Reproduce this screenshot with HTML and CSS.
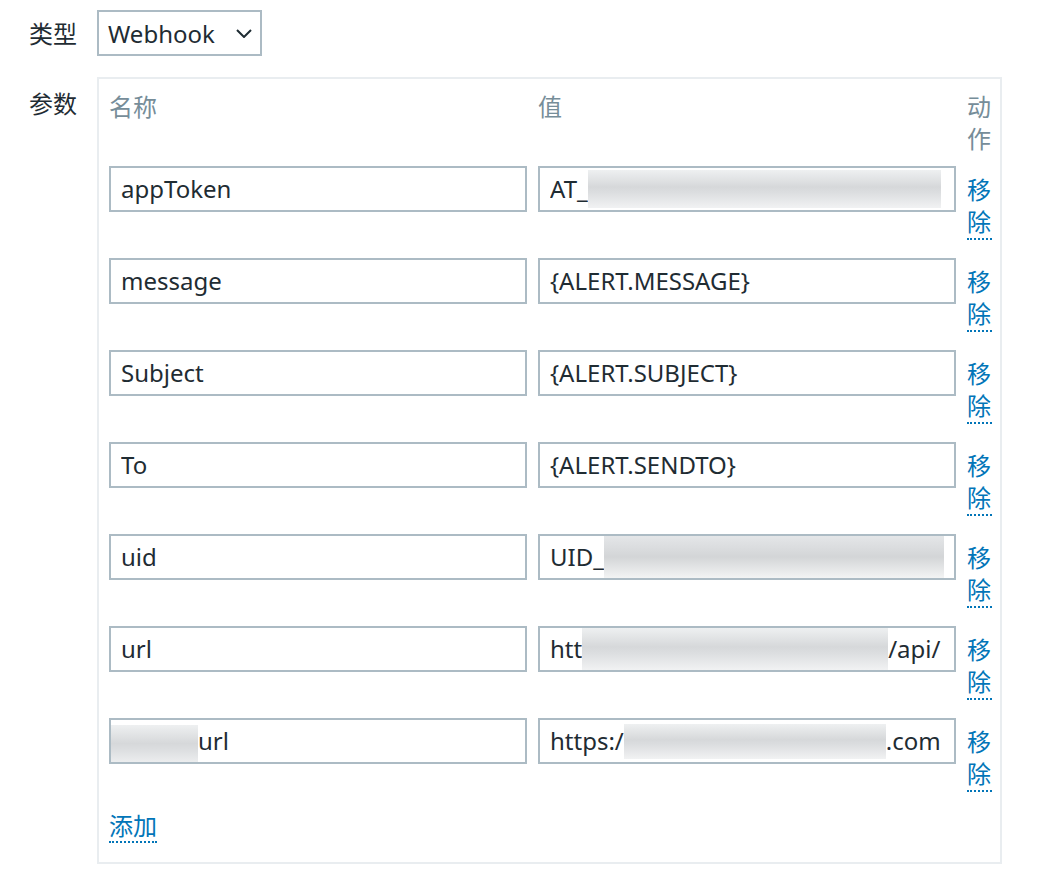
FILE: index.html
```html
<!DOCTYPE html>
<html lang="zh">
<head>
<meta charset="utf-8">
<title>Webhook</title>
<link rel="stylesheet" href="styles.css">
</head>
<body>
<div class="form">
  <div class="label lbl-type">类型</div>
  <div class="field">
    <div class="select">
      <span class="select-text">Webhook</span>
      <svg class="chevron" width="16" height="9" viewBox="0 0 16 9"><polyline points="1,1 8,8 15,1" fill="none" stroke="#1f2c33" stroke-width="2"/></svg>
    </div>
  </div>
  <div class="label lbl-params">参数</div>
  <div class="field">
    <div class="params">
      <div class="prow head">
        <div class="hcell">名称</div>
        <div class="hcell">值</div>
        <div class="hcell">动作</div>
      </div>
      <div class="prow">
        <div class="input"><div class="txt">appToken</div></div>
        <div class="input"><div class="txt">AT_<span class="blur b1"></span></div></div>
        <div class="act"><a class="link-action">移除</a></div>
      </div>
      <div class="prow">
        <div class="input"><div class="txt">message</div></div>
        <div class="input"><div class="txt">{ALERT.MESSAGE}</div></div>
        <div class="act"><a class="link-action">移除</a></div>
      </div>
      <div class="prow">
        <div class="input"><div class="txt">Subject</div></div>
        <div class="input"><div class="txt">{ALERT.SUBJECT}</div></div>
        <div class="act"><a class="link-action">移除</a></div>
      </div>
      <div class="prow">
        <div class="input"><div class="txt">To</div></div>
        <div class="input"><div class="txt">{ALERT.SENDTO}</div></div>
        <div class="act"><a class="link-action">移除</a></div>
      </div>
      <div class="prow">
        <div class="input"><div class="txt">uid</div></div>
        <div class="input"><div class="txt">UID_<span class="blur b5"></span></div></div>
        <div class="act"><a class="link-action">移除</a></div>
      </div>
      <div class="prow">
        <div class="input"><div class="txt">url</div></div>
        <div class="input"><div class="txt">htt<span class="blur b6"></span>/api/</div></div>
        <div class="act"><a class="link-action">移除</a></div>
      </div>
      <div class="prow">
        <div class="input"><div class="txt nopad"><span class="blur b7n"></span>url</div></div>
        <div class="input"><div class="txt">https:/<span class="blur b7"></span>.com</div></div>
        <div class="act"><a class="link-action">移除</a></div>
      </div>
      <div class="add"><a class="link-action add-link">添加</a></div>
    </div>
  </div>
</div>
</body>
</html>
```

FILE: styles.css
```css
* { box-sizing: border-box; }
body {
  margin: 0;
  padding: 10px 0 0 0;
  background: #ffffff;
  font-family: "Noto Sans", "Noto Sans CJK SC", sans-serif;
  font-size: 24px;
  line-height: 32px;
  color: #1f2c33;
}
.form {
  display: grid;
  grid-template-columns: 77px 905px;
  column-gap: 20px;
  row-gap: 21px;
}
.label {
  text-align: right;
  color: #1f2c33;
}
.lbl-type { padding-top: 8px; }
.lbl-params { padding-top: 11px; }
.select {
  width: 165px;
  height: 46px;
  border: 2px solid #acbbc4;
  display: flex;
  align-items: center;
  justify-content: space-between;
  padding: 2px 8px 0 9px;
}
.select-text { white-space: nowrap; }
.chevron { display: block; margin-top: -2px; }
.params {
  width: 905px;
  border: 2px solid #e9edf0;
  padding: 12px 8px 19px 10px;
}
.prow {
  display: grid;
  grid-template-columns: 418px 418px 25px;
  column-gap: 11px;
  align-items: start;
  margin-bottom: 18px;
}
.prow.head { margin-bottom: 11px; }
.hcell { color: #768d99; }
.input {
  height: 46px;
  border: 2px solid #acbbc4;
  background: #fff;
  padding: 0 10px;
  display: flex;
  align-items: center;
}
.txt {
  width: 100%;
  overflow: hidden;
  white-space: nowrap;
  height: 42px;
  line-height: 42px;
  display: flex;
  align-items: center;
}
.txt.nopad { margin-left: -10px; width: calc(100% + 10px); }
.blur {
  display: inline-block;
  flex: none;
  background: linear-gradient(to bottom, #eef0f1 0%, #d6d8da 45%, #dcdee0 60%, #f1f2f3 100%);
}
.b1 { width: 353px; height: 38px; }
.b5 { width: 343px; height: 42px; background: linear-gradient(to bottom, #e4e6e8 0%, #d3d5d7 50%, #f3f4f4 100%); }
.b6 { width: 306px; height: 42px; }
.b7 { width: 262px; height: 35px; }
.b7n { width: 87px; height: 41px; margin-top: 8px; }
.act { padding-top: 8px; }
.link-action {
  color: #0275b8;
  text-decoration: none;
  border-bottom: 2px dotted #0275b8;
  cursor: pointer;
}
.act .link-action {
  display: inline-block;
  width: 25px;
  line-height: 32px;
  word-break: break-all;
}
.add { margin-top: 3px; }
.add-link { display: inline-block; line-height: 30px; }
```
